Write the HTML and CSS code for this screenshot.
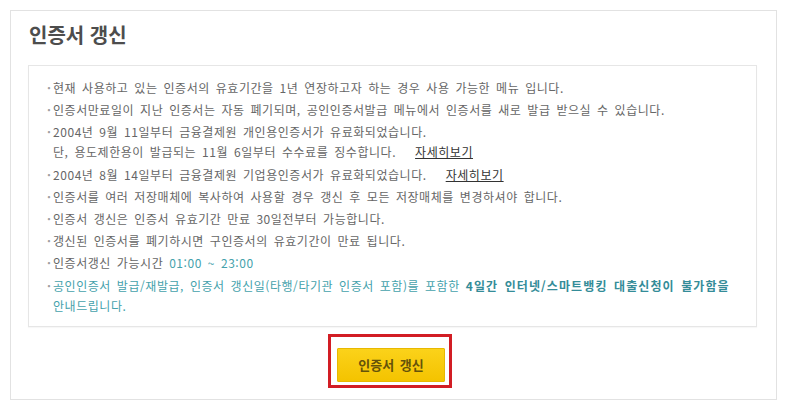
FILE: index.html
```html
<!DOCTYPE html>
<html lang="ko">
<head>
<meta charset="utf-8">
<title>인증서 갱신</title>
<link rel="stylesheet" href="styles.css">
</head>
<body>
<div class="panel">
  <h2 class="title">인증서 갱신</h2>
  <div class="notice">
    <ul class="notes">
      <li>현재 사용하고 있는 인증서의 유효기간을 1년 연장하고자 하는 경우 사용 가능한 메뉴 입니다.</li>
      <li>인증서만료일이 지난 인증서는 자동 폐기되며, 공인인증서발급 메뉴에서 인증서를 새로 발급 받으실 수 있습니다.</li>
      <li>2004년 9월 11일부터 금융결제원 개인용인증서가 유료화되었습니다.<br>단, 용도제한용이 발급되는 11월 6일부터 수수료를 징수합니다.<a class="more" href="#">자세히보기</a></li>
      <li>2004년 8월 14일부터 금융결제원 기업용인증서가 유료화되었습니다.<a class="more" href="#">자세히보기</a></li>
      <li>인증서를 여러 저장매체에 복사하여 사용할 경우 갱신 후 모든 저장매체를 변경하셔야 합니다.</li>
      <li>인증서 갱신은 인증서 유효기간 만료 30일전부터 가능합니다.</li>
      <li>갱신된 인증서를 폐기하시면 구인증서의 유효기간이 만료 됩니다.</li>
      <li>인증서갱신 가능시간 <span class="teal">01:00 ~ 23:00</span></li>
      <li class="teal">공인인증서 발급/재발급, 인증서 갱신일(타행/타기관 인증서 포함)를 포함한 <strong class="strong">4일간 인터넷/스마트뱅킹 대출신청이 불가함을</strong><br>안내드립니다.</li>
    </ul>
  </div>
  <div class="actions">
    <div class="highlight">
      <button class="btn" type="button">인증서 갱신</button>
    </div>
  </div>
</div>
</body>
</html>
```

FILE: styles.css
```css
html, body {
  margin: 0;
  padding: 0;
  background: #ffffff;
}

body {
  font-family: "Noto Sans CJK KR", "Noto Sans", "Liberation Sans", sans-serif;
  color: #666666;
}

.panel {
  margin: 10px 0 0 10px;
  box-sizing: border-box;
  width: 767px;
  height: 390px;
  border: 1px solid #e2e2e2;
  padding: 0 18px 0 17px;
  display: flex;
  flex-direction: column;
}

.title {
  margin: 12px 0 0 1px;
  font-size: 20px;
  line-height: 24px;
  font-weight: 700;
  color: #4d4d4d;
}

.notice {
  margin-top: 18px;
  width: 729px;
  box-sizing: border-box;
  border: 1px solid #e6e6e6;
  box-shadow: 0 1px 1px rgba(0, 0, 0, 0.03);
  padding: 12px 10px 10px 18px;
}

.notes {
  list-style: none;
  margin: 0;
  padding: 0;
  font-size: 12px;
  line-height: 20px;
  letter-spacing: 0.55px;
  word-spacing: 2px;
}

.notes li {
  padding-left: 6px;
  margin-top: 2.2px;
}

.notes li:first-child {
  margin-top: 0;
}

.notes li::before {
  content: "·";
  display: inline-block;
  width: 6px;
  margin-left: -6px;
  color: #a0a0a0;
  font-weight: 700;
}

.more {
  margin-left: 19px;
  color: #333333;
  text-decoration: underline;
}

.teal {
  color: #45a2ac;
}

.strong {
  color: #348c98;
  font-weight: 700;
  letter-spacing: 1.1px;
}

.actions {
  display: flex;
  justify-content: center;
  margin-top: 7px;
  padding-right: 6px;
}

.highlight {
  border: 3px solid #d21d24;
  padding: 11px 4px 3px 6px;
}

.btn {
  display: block;
  width: 108px;
  height: 34px;
  border: 1px solid #e8b800;
  border-radius: 1px;
  background: linear-gradient(#fbd21a, #f4c300);
  color: #65530a;
  font-family: "Noto Sans CJK KR", "Noto Sans", sans-serif;
  font-size: 13px;
  font-weight: 700;
  word-spacing: 2px;
  padding: 0;
  cursor: pointer;
}
```
